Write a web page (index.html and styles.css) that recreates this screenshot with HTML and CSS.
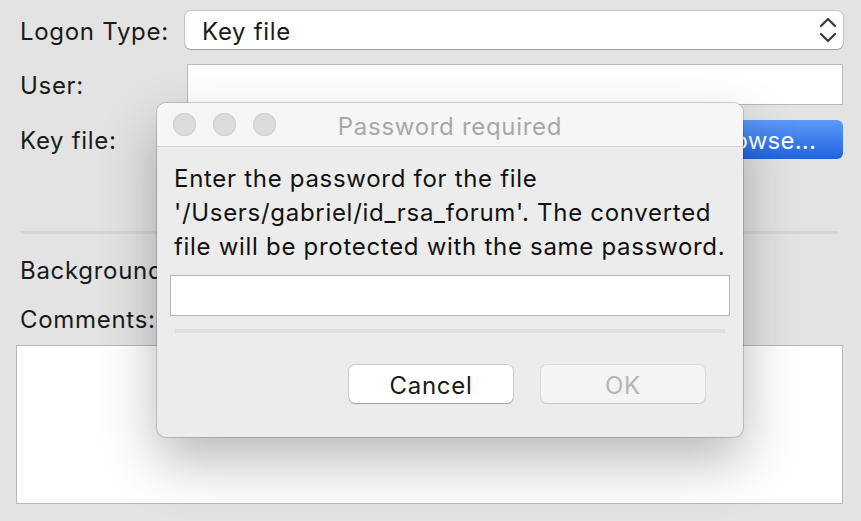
FILE: index.html
```html
<!DOCTYPE html>
<html>
<head>
<meta charset="utf-8">
<link rel="stylesheet" href="styles.css">
</head>
<body>
<div class="window">
  <div class="form">
    <div class="row r1">
      <div class="label">Logon Type:</div>
      <div class="select">
        <span>Key file</span>
        <svg class="chev" width="18" height="26" viewBox="0 0 18 26"><path d="M2 9 L9 2 L16 9" fill="none" stroke="#3a3a3a" stroke-width="2.2" stroke-linecap="round" stroke-linejoin="round"/><path d="M2 17 L9 24 L16 17" fill="none" stroke="#3a3a3a" stroke-width="2.2" stroke-linecap="round" stroke-linejoin="round"/></svg>
      </div>
    </div>
    <div class="row r2">
      <div class="label">User:</div>
      <div class="input"></div>
    </div>
    <div class="row r3">
      <div class="label">Key file:</div>
      <div class="input keyinput"></div>
      <div class="btn-blue">Browse...</div>
    </div>
    <div class="sep"></div>
    <div class="label line lbg">Background color:</div>
    <div class="label line lcom">Comments:</div>
    <div class="textarea"></div>
  </div>

  <div class="dialog">
    <div class="titlebar">
      <div class="lights"><span class="light"></span><span class="light"></span><span class="light"></span></div>
      <div class="title">Password required</div>
    </div>
    <div class="dbody">
      <p class="msg">Enter the password for the file<br>'/Users/gabriel/id_rsa_forum'. The converted<br>file will be protected with the same password.</p>
      <div class="pwinput"></div>
      <div class="dsep"></div>
      <div class="buttons">
        <div class="btn cancel">Cancel</div>
        <div class="btn ok">OK</div>
      </div>
    </div>
  </div>
</div>
</body>
</html>
```

FILE: styles.css
```css
* { box-sizing: border-box; }
html, body { margin: 0; padding: 0; }
body {
  width: 861px;
  height: 521px;
  overflow: hidden;
  background: #e3e3e3;
  font-family: Inter, "Noto Sans", sans-serif;
  font-size: 24px;
  letter-spacing: 0.7px;
  color: #1a1a1a;
}
.window { position: relative; width: 861px; height: 521px; }
.form { padding: 11px 18px 0 20px; }
.row { display: flex; align-items: center; }
.label { width: 165px; flex: none; line-height: 34px; padding-top: 3px; white-space: nowrap; }
.r1 { height: 38px; }
.r2 { height: 41px; margin-top: 15px; }
.r3 { height: 39px; margin-top: 15px; }
.select {
  flex: 1;
  height: 38px;
  background: #fff;
  border-radius: 6px;
  box-shadow: 0 0 0 1px rgba(0,0,0,0.13), 0 1px 1px rgba(0,0,0,0.2);
  display: flex;
  align-items: center;
  justify-content: space-between;
  padding: 2px 6px 0 17px;
}
.chev { display: block; margin-top: -2px; }
.input {
  flex: 1;
  height: 41px;
  margin-left: 2px;
  background: #fff;
  border: 1px solid #b9b9b9;
}
.keyinput { height: 39px; }
.btn-blue {
  width: 160px;
  height: 39px;
  margin-left: 10px;
  border-radius: 6px;
  background: linear-gradient(#5c9af7, #2163e0);
  color: #fff;
  display: flex;
  align-items: center;
  justify-content: flex-end;
  padding: 2px 27px 0 0;
  letter-spacing: 0.2px;
}
.sep {
  height: 3px;
  margin: 72px 5px 0 1px;
  background: #d6d6d6;
}
.line { width: auto; height: 34px; }
.lbg { margin-top: 17px; }
.lcom { margin-top: 15px; }
.textarea {
  height: 159px;
  margin: 11px 0 0 -4px;
  background: #fff;
  border: 1px solid #b8b8b8;
}

.dialog {
  position: absolute;
  left: 157px;
  top: 103px;
  width: 586px;
  height: 334px;
  border-radius: 9px;
  background: #ececec;
  box-shadow: 0 0 0 1px rgba(0,0,0,0.16), 0 24px 55px rgba(0,0,0,0.28);
  overflow: hidden;
}
.titlebar {
  height: 44px;
  background: #f6f6f6;
  border-bottom: 1px solid #d2d2d2;
  display: flex;
  align-items: center;
  justify-content: center;
  position: relative;
}
.lights {
  position: absolute;
  left: 16px;
  top: 10px;
  display: flex;
  gap: 17px;
}
.light {
  width: 23px;
  height: 23px;
  border-radius: 50%;
  background: #dcdcdc;
  box-shadow: inset 0 0 0 1px #d0d0d0;
}
.title { color: #a8a8a8; padding-top: 4px; }
.dbody { padding: 15px 13px 0 13px; }
.msg { margin: 0; padding-left: 4px; line-height: 34px; color: #111; white-space: nowrap; }
.pwinput {
  height: 41px;
  margin-top: 11px;
  background: #fff;
  border: 1px solid #b5b5b5;
}
.dsep { height: 4px; margin: 13px 5px 0 5px; background: #e0e0e0; }
.buttons {
  display: flex;
  justify-content: flex-end;
  gap: 28px;
  margin-top: 32px;
  padding-right: 25px;
}
.btn {
  width: 164px;
  height: 38px;
  border-radius: 6px;
  display: flex;
  align-items: center;
  justify-content: center;
  padding-top: 2px;
}
.cancel {
  background: #fff;
  color: #1a1a1a;
  box-shadow: 0 0 0 1px rgba(0,0,0,0.12), 0 1px 1px rgba(0,0,0,0.22);
}
.ok {
  background: #f4f4f4;
  color: #b5b5b5;
  box-shadow: 0 0 0 1px rgba(0,0,0,0.07), 0 1px 1px rgba(0,0,0,0.08);
}
```
